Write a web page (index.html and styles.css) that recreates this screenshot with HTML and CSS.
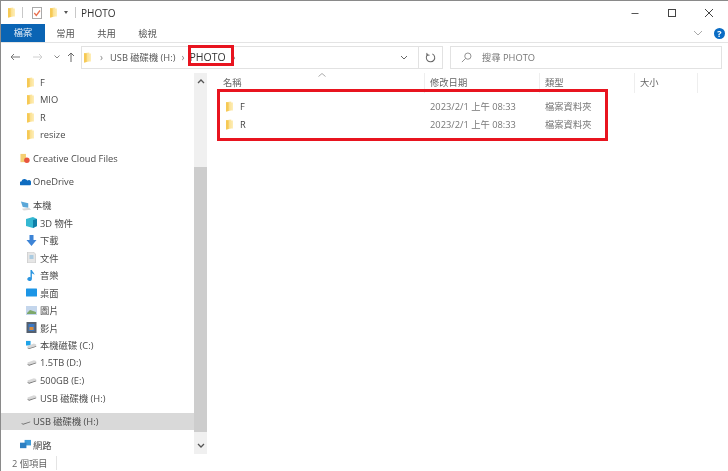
FILE: index.html
```html
<!DOCTYPE html>
<html lang="zh-Hant">
<head>
<meta charset="utf-8">
<title>PHOTO</title>
<link rel="stylesheet" href="styles.css">
</head>
<body>
<svg class="defs" width="0" height="0" aria-hidden="true">
  <defs>
    <linearGradient id="fg" x1="0" y1="0" x2="1" y2="0"><stop offset="0" stop-color="#f8d470"/><stop offset="1" stop-color="#feeeb8"/></linearGradient>
    <symbol id="folder" viewBox="0 0 8 12"><path d="M0 1 L6 0.3 V1.5 H8 V10.5 H6 L0 11.7 Z" fill="url(#fg)"/><path d="M0 1 L3 1.5 V11 L0 11.7Z" fill="#f6c955"/></symbol>
    <symbol id="drive" viewBox="0 0 14 10"><path d="M2 5 L10 2 L13 3 L13 5 L4 8 L2 7Z" fill="#d8d8d8"/><path d="M2 7 L4 8 L13 5 V6 L4 9 L2 8Z" fill="#6e6e6e"/></symbol>
  </defs>
</svg>
<div class="window">
  <header class="titlebar">
    <svg class="ic-folder"><use href="#folder"/></svg>
    <span class="sep sep-a"></span>
    <svg class="ic-check" viewBox="0 0 10 12"><rect x="0.5" y="0.5" width="9" height="11" fill="#fff" stroke="#aaa"/><path d="M2.3 6 L4.3 8.5 L8 3.5" fill="none" stroke="#e8704f" stroke-width="1.3"/></svg>
    <svg class="ic-folder ic-folder2"><use href="#folder"/></svg>
    <span class="qa-drop"></span>
    <span class="sep sep-b"></span>
    <span class="title">PHOTO</span>
    <span class="winbtns">
      <svg viewBox="0 0 10 10" width="10" height="10"><path d="M1.5 5.5H8.5" stroke="#555" stroke-width="1"/></svg>
      <svg viewBox="0 0 10 10" width="10" height="10"><rect x="1.5" y="1.5" width="7" height="7" fill="none" stroke="#444"/></svg>
      <svg viewBox="0 0 10 10" width="10" height="10"><path d="M1 1L9 9M9 1L1 9" stroke="#444"/></svg>
    </span>
  </header>
  <nav class="tabs">
    <span class="tab tab-file">檔案</span>
    <span class="tab">常用</span>
    <span class="tab">共用</span>
    <span class="tab">檢視</span>
    <svg class="ribbon-chev" viewBox="0 0 10 6" width="10" height="6"><path d="M1 1L5 5L9 1" fill="none" stroke="#aaa"/></svg>
    <span class="help">?</span>
  </nav>
  <div class="addressrow">
    <div class="navbtns">
      <svg viewBox="0 0 10 8" width="10" height="8"><path d="M10 4H1M4 1L1 4L4 7" fill="none" stroke="#777"/></svg>
      <svg viewBox="0 0 10 8" width="10" height="8"><path d="M0 4H9M6 1L9 4L6 7" fill="none" stroke="#d0d0d0"/></svg>
      <svg viewBox="0 0 6 4" width="6" height="4"><path d="M0.5 0.5L3 3L5.5 0.5" fill="none" stroke="#888"/></svg>
      <svg viewBox="0 0 8 10" width="8" height="10"><path d="M4 10V1M1 4L4 1L7 4" fill="none" stroke="#666"/></svg>
    </div>
    <div class="address">
      <svg class="ic-folder"><use href="#folder"/></svg>
      <span class="crumb-sep crumb-first">›</span>
      <span class="crumb">USB 磁碟機 (H:)</span>
      <span class="crumb-sep">›</span>
      <span class="crumb crumb-cur">PHOTO</span>
      <span class="crumb-sep crumb-end">›</span>
      <span class="addr-drop"><svg viewBox="0 0 8 5" width="8" height="5"><path d="M1 1L4 4L7 1" fill="none" stroke="#666"/></svg></span>
      <span class="refresh"><svg viewBox="0 0 12 12" width="11" height="11"><path d="M3.5 2.3A4.6 4.6 0 1 0 8 2" fill="none" stroke="#666" stroke-width="1.1"/><path d="M2 1V3.5H5" fill="none" stroke="#666"/></svg></span>
    </div>
    <div class="search">
      <svg viewBox="0 0 12 12" width="11" height="11"><circle cx="7.5" cy="4.5" r="3.4" fill="none" stroke="#888"/><path d="M5 7L1 11" stroke="#888"/></svg>
      <span>搜尋 PHOTO</span>
    </div>
  </div>
  <main class="main">
    <aside class="tree">
      <div class="row lv2"><svg class="ic-folder"><use href="#folder"/></svg><span>F</span></div>
      <div class="row lv2"><svg class="ic-folder"><use href="#folder"/></svg><span>MIO</span></div>
      <div class="row lv2"><svg class="ic-folder"><use href="#folder"/></svg><span>R</span></div>
      <div class="row lv2"><svg class="ic-folder"><use href="#folder"/></svg><span>resize</span></div>
      <div class="row lv1 gap"><svg class="ic" viewBox="0 0 11 12"><path d="M0 1H6V10H0Z" fill="#f5cf72"/><circle cx="7" cy="8" r="3" fill="#e8553f"/></svg><span>Creative Cloud Files</span></div>
      <div class="row lv1 gap"><svg class="ic" viewBox="0 0 12 8"><path d="M1 8A2 2 0 0 1 1.5 4A3.5 3.5 0 0 1 8 3A2.5 2.5 0 0 1 11 8Z" fill="#0f6cc0"/></svg><span>OneDrive</span></div>
      <div class="row lv1 gap"><svg class="ic" viewBox="0 0 12 11"><path d="M1 1L9 3V8L3 7Z" fill="#5ba7d8"/><path d="M2 9L10 8L12 10L4 11Z" fill="#d9d9d9"/></svg><span>本機</span></div>
      <div class="row lv2"><svg class="ic" viewBox="0 0 11 11"><path d="M0 2L7 0L11 2V9L7 11L0 9Z" fill="#35b8d2"/><path d="M7 3L11 2V9L7 11Z" fill="#0f7fa8"/></svg><span>3D 物件</span></div>
      <div class="row lv2"><svg class="ic" viewBox="0 0 10 11"><path d="M3 0H7V5H10L5 11L0 5H3Z" fill="#3d84d6"/></svg><span>下載</span></div>
      <div class="row lv2"><svg class="ic" viewBox="0 0 10 11"><path d="M1 0H7L9 2V11H1Z" fill="#e6e6e6" stroke="#b5b5b5" stroke-width=".5"/><path d="M3 4H7M3 6H7" stroke="#6fb0dc"/></svg><span>文件</span></div>
      <div class="row lv2"><svg class="ic" viewBox="0 0 10 11"><path d="M4 0H5.4C5.6 2 8 2.5 8 5C7 3.7 6 3.5 5.4 3.5V9A2.3 2 0 1 1 4 7.2Z" fill="#2a95e0"/></svg><span>音樂</span></div>
      <div class="row lv2"><svg class="ic" viewBox="0 0 11 8"><rect width="11" height="8" rx=".5" fill="#1c95e6"/></svg><span>桌面</span></div>
      <div class="row lv2"><svg class="ic" viewBox="0 0 11 9"><rect width="11" height="9" fill="#c4d6ec"/><path d="M1 7L4 4L10 6V8H1Z" fill="#7da86b"/></svg><span>圖片</span></div>
      <div class="row lv2"><svg class="ic" viewBox="0 0 10 11"><rect width="10" height="11" fill="#56606e"/><rect x="2" y="2" width="6" height="7" fill="#3b78c4"/><rect x="3" y="5" width="4" height="3" fill="#d98a38"/></svg><span>影片</span></div>
      <div class="row lv2"><svg class="ic" viewBox="0 0 12 10"><rect x="0" y="0" width="5" height="5" fill="#1fa3e8"/><use href="#drive" x="0" y="1" width="12" height="9"/></svg><span>本機磁碟 (C:)</span></div>
      <div class="row lv2"><svg class="ic"><use href="#drive"/></svg><span>1.5TB (D:)</span></div>
      <div class="row lv2"><svg class="ic"><use href="#drive"/></svg><span>500GB (E:)</span></div>
      <div class="row lv2"><svg class="ic"><use href="#drive"/></svg><span>USB 磁碟機 (H:)</span></div>
      <div class="row lv1 gap selected"><svg class="ic"><use href="#drive"/></svg><span>USB 磁碟機 (H:)</span></div>
      <div class="row lv1 gap"><svg class="ic" viewBox="0 0 12 10"><rect x="5" y="0" width="7" height="6" fill="#3f9bd8"/><rect x="0" y="3" width="7" height="6" fill="#2d7fc2"/></svg><span>網路</span></div>
    </aside>
    <div class="scrollbar">
      <svg class="sb-btn" viewBox="0 0 8 5" width="8" height="5"><path d="M1 4L4 1L7 4" fill="none" stroke="#555" stroke-width="1.3"/></svg>
      <div class="sb-track"><div class="sb-thumb"></div></div>
      <svg class="sb-btn" viewBox="0 0 8 5" width="8" height="5"><path d="M1 1L4 4L7 1" fill="none" stroke="#555" stroke-width="1.3"/></svg>
    </div>
    <section class="list">
      <div class="sort-caret"><svg viewBox="0 0 8 4" width="8" height="4"><path d="M0.5 3.5L4 0.5L7.5 3.5" fill="none" stroke="#aaa"/></svg></div>
      <div class="cols head">
        <span class="c-name">名稱</span>
        <span class="c-date">修改日期</span>
        <span class="c-type">類型</span>
        <span class="c-size">大小</span>
      </div>
      <div class="cols file">
        <span class="c-name"><svg class="ic-folder"><use href="#folder"/></svg>F</span>
        <span class="c-date">2023/2/1 上午 08:33</span>
        <span class="c-type">檔案資料夾</span>
      </div>
      <div class="cols file">
        <span class="c-name"><svg class="ic-folder"><use href="#folder"/></svg>R</span>
        <span class="c-date">2023/2/1 上午 08:33</span>
        <span class="c-type">檔案資料夾</span>
      </div>
    </section>
  </main>
  <footer class="status"><span>2 個項目</span></footer>
  <div class="mark mark-path"></div>
  <div class="mark mark-files"></div>
</div>
</body>
</html>
```

FILE: styles.css
```css
* { box-sizing: border-box; }
html, body { margin: 0; height: 100%; }
body { background: #fff; overflow: hidden; }
.defs { position: absolute; }
.window {
  position: relative;
  width: 728px;
  height: 471px;
  display: flex;
  flex-direction: column;
  border-top: 1px solid #8a8a8a;
  border-left: 1px solid #8a8a8a;
  font-family: "Open Sans", "Noto Sans CJK TC", sans-serif;
  font-size: 9.3px;
  color: #444;
  filter: blur(0.45px);
}
.ic-folder { width: 7px; height: 11px; flex: none; }
.titlebar { height: 23px; flex: none; display: flex; align-items: center; padding-left: 7px; }
.sep { width: 1px; height: 11px; background: #c8c8c8; }
.sep-a { margin-left: 7px; }
.ic-check { width: 10px; height: 12px; margin-left: 9px; }
.ic-folder2 { margin-left: 8px; }
.qa-drop { width: 0; height: 0; margin-left: 7px; border: 2.5px solid transparent; border-top: 3px solid #555; border-bottom: 0; }
.sep-b { margin-left: 7px; }
.title { margin-left: 5px; font-size: 10px; color: #333; }
.winbtns { margin-left: auto; display: flex; gap: 27px; padding-right: 14px; }
.tabs { height: 19px; flex: none; display: flex; align-items: center; border-bottom: 1px solid #e4e4e4; position: relative; }
.tab { width: 41px; text-align: center; color: #555; }
.tab-file { width: 44px; height: 18px; line-height: 18px; background: #0a64b4; color: #dfeaf5; }
.ribbon-chev { margin-left: auto; margin-right: 3px; }
.help { width: 11px; height: 11px; margin-right: 3px; margin-left: 8px; border-radius: 50%; background: #0a6cc4; color: #fff; font-size: 9px; font-weight: 700; line-height: 11px; text-align: center; }
.addressrow { height: 30px; flex: none; display: flex; align-items: center; padding-bottom: 2px; }
.navbtns { width: 80px; padding-left: 9px; display: flex; align-items: center; }
.navbtns svg:nth-child(2) { margin-left: 13px; }
.navbtns svg:nth-child(3) { margin-left: 11px; }
.navbtns svg:nth-child(4) { margin-left: 7px; }
.address { width: 362px; height: 23px; border: 1px solid #e2e2e2; display: flex; align-items: center; padding-left: 2px; }
.crumb { color: #555; }
.crumb-sep { color: #888; margin: 0 5px 0 6px; font-size: 10px; }
.crumb-first { margin: 0 7px 0 9px; }
.crumb-cur { color: #333; margin-left: 0; font-size: 10.5px; }
.crumb-end { margin-left: 7px; }
.addr-drop { margin-left: auto; width: 18px; display: flex; }
.refresh { width: 24px; height: 21px; border-left: 1px solid #e2e2e2; display: flex; align-items: center; justify-content: center; }
.search { width: 272px; height: 23px; margin-left: 7px; border: 1px solid #e2e2e2; display: flex; align-items: center; padding-left: 10px; gap: 10px; color: #777; }
.main { flex: 1; min-height: 0; display: flex; }
.tree { width: 193px; flex: none; padding-top: 0.5px; }
.row { height: 17.5px; display: flex; align-items: center; white-space: nowrap; color: #4a4a4a; }
.row.gap { margin-top: 6px; }
.lv2 { padding-left: 26px; }
.lv1 { padding-left: 19px; }
.lv2 .ic-folder { margin-right: 6px; }
.ic { width: 11px; height: 11px; flex: none; margin-right: 2px; }
.lv2 .ic { margin-left: -1px; margin-right: 3px; }
.selected { background: #d9d9d9; }
.scrollbar { width: 13px; flex: none; background: #f0f0f0; display: flex; flex-direction: column; align-items: center; }
.sb-btn { flex: none; margin: 6px 0; }
.sb-track { flex: 1; width: 100%; padding: 77px 0 5px; display: flex; }
.sb-thumb { flex: 1; background: #cdcdcd; }
.list { flex: 1; min-width: 0; position: relative; }
.sort-caret { position: absolute; left: 111px; top: 0; line-height: 0; }
.cols { display: grid; grid-template-columns: 218px 115px 95px 63px; align-items: center; white-space: nowrap; }
.head { height: 20px; margin-bottom: 4px; color: #666; }
.head span { height: 20px; line-height: 20px; padding-left: 5px; border-right: 1px solid #eee; }
.head .c-name { padding-left: 16px; }
.file { height: 18px; color: #777; }
.file span { padding-left: 5px; }
.file .c-name { padding-left: 19px; display: flex; align-items: center; gap: 7px; color: #444; }
.status { height: 17px; flex: none; padding-left: 11px; display: flex; align-items: center; color: #666; }
.status span { padding-right: 8px; border-right: 1px solid #e4e4e4; }
.mark { position: absolute; border: 3px solid #e8141f; }
.mark-path { left: 187px; top: 44px; width: 46px; height: 21px; }
.mark-files { left: 216px; top: 88px; width: 391px; height: 52px; }
```
